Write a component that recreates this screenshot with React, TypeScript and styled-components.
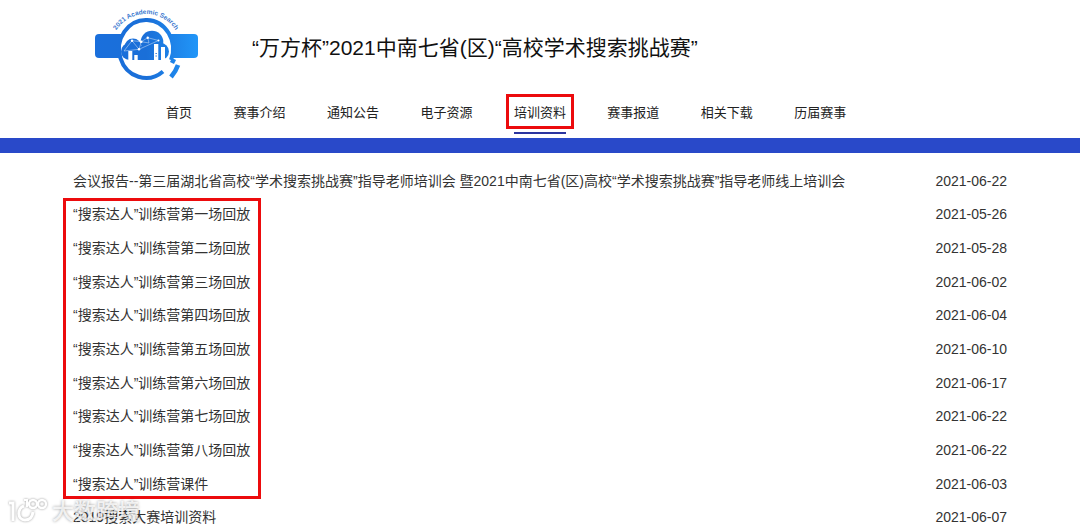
import React from "react";
import styled, { createGlobalStyle } from "styled-components";

const GlobalStyle = createGlobalStyle`
  * { box-sizing: border-box; }
  body {
    margin: 0;
    background: #fff;
    color: #333;
    font-family: "Liberation Sans", Arial, "Noto Sans CJK SC", sans-serif;
  }
`;

const Page = styled.div`
  position: relative;
  height: 100vh;
  overflow: hidden;
`;

const Header = styled.header`
  display: flex;
  align-items: center;
  gap: 52px;
  height: 96px;
  padding-left: 92px;
`;

const Title = styled.h1`
  margin: 0;
  font-size: 21px;
  line-height: 28px;
  font-weight: 400;
  color: #111;
  white-space: nowrap;
`;

const Nav = styled.nav`
  display: flex;
  justify-content: space-between;
  width: 63%;
  height: 42px;
  margin-left: 166px;
`;

const NavLink = styled.a<{ $active?: boolean }>`
  position: relative;
  height: 38px;
  border-bottom: 2px solid ${(p) => (p.$active ? "#2b35a0" : "transparent")};
  color: #222;
  font-size: 13px;
  line-height: 34px;
  text-decoration: none;
  white-space: nowrap;
`;

const Marker = styled.span`
  position: absolute;
  border: 3px solid #ec0b0d;
  pointer-events: none;
`;

const NavMarker = styled(Marker)`
  inset: -2px -8px 3px;
`;

const ListMarker = styled(Marker)`
  top: 34px;
  left: -10px;
  width: 198px;
  height: 301px;
`;

const Band = styled.div`
  height: 15px;
  background: #2949c9;
`;

const List = styled.ul`
  position: relative;
  display: grid;
  grid-auto-rows: 1fr;
  height: 370px;
  margin: 11px 73px 0;
  padding: 0;
  list-style: none;
`;

const Row = styled.li`
  display: flex;
  justify-content: space-between;
  align-items: center;
  font-size: 14px;
  line-height: 20px;
  white-space: nowrap;
`;

const RowLink = styled.a`
  color: #333;
  text-decoration: none;
`;

const Watermark = styled.div`
  position: absolute;
  left: 8px;
  bottom: 4px;
  display: flex;
  align-items: center;
  gap: 4px;
  color: rgba(255, 255, 255, 0.8);
  font-size: 22px;
  line-height: 30px;
  font-weight: 500;
  text-shadow: 0 0 3px rgba(0, 0, 0, 0.4);
`;

const WatermarkIcon = styled.svg`
  overflow: visible;
  filter: drop-shadow(0 0 1px rgba(0, 0, 0, 0.4));
`;

const nav = ["首页", "赛事介绍", "通知公告", "电子资源", "培训资料", "赛事报道", "相关下载", "历届赛事"];

const rows = [
  ["会议报告--第三届湖北省高校“学术搜索挑战赛”指导老师培训会 暨2021中南七省(区)高校“学术搜索挑战赛”指导老师线上培训会", "2021-06-22"],
  ["“搜索达人”训练营第一场回放", "2021-05-26"],
  ["“搜索达人”训练营第二场回放", "2021-05-28"],
  ["“搜索达人”训练营第三场回放", "2021-06-02"],
  ["“搜索达人”训练营第四场回放", "2021-06-04"],
  ["“搜索达人”训练营第五场回放", "2021-06-10"],
  ["“搜索达人”训练营第六场回放", "2021-06-17"],
  ["“搜索达人”训练营第七场回放", "2021-06-22"],
  ["“搜索达人”训练营第八场回放", "2021-06-22"],
  ["“搜索达人”训练营课件", "2021-06-03"],
  ["2019搜索大赛培训资料", "2021-06-07"],
];

function Logo() {
  return (
    <svg width="108" height="84" viewBox="0 0 108 84" role="img" aria-label="2021 Academic Search">
      <defs>
        <linearGradient id="blue" gradientUnits="userSpaceOnUse" x1="3" y1="0" x2="106" y2="0">
          <stop offset="0" stopColor="#1a6fdc" />
          <stop offset="0.5" stopColor="#1a6fd8" />
          <stop offset="1" stopColor="#2196f8" />
        </linearGradient>
        <path id="arc" d="M19 43 A35 35 0 0 1 89 43" />
      </defs>
      <rect x="3" y="28" width="103" height="24" rx="4" fill="url(#blue)" />
      <ellipse cx="54" cy="43" rx="27" ry="29" fill="#fff" />
      <path d="M71 65.500 A27 29 0 1 1 79 54" fill="none" stroke="url(#blue)" strokeWidth="4" />
      <g fill="url(#blue)">
        <circle cx="41" cy="41" r="8.500" />
        <circle cx="37.500" cy="45.500" r="8.500" />
        <circle cx="60" cy="36" r="11.300" />
        <circle cx="68.500" cy="45.500" r="8.500" />
        <path d="M37 40h32v14H37z" />
      </g>
      <g fill="#fff">
        <path d="M36.300 45h4v9.500h-4zM42.300 49h3.400v5.500h-3.400zM62 38h4.300v16.500H62zM69 41h4v13.500h-4z" />
        <circle cx="40" cy="34.700" r="1.200" />
        <circle cx="55.700" cy="31.700" r="1.200" />
        <circle cx="49.300" cy="35.700" r="1.200" />
        <circle cx="66.500" cy="34.500" r="1" />
        <circle cx="47" cy="43.300" r="1.200" />
      </g>
      <path d="M63.500 47.500h1.300M63.500 50h1.300" stroke="#1a6fd8" strokeWidth="1" />
      <path
        d="M32 45 40 34.700 47 43.300 49.300 35.700 55.700 31.700 66.500 34.500 47 43.300 32 45M40 34.700 49.300 35.700 57 37 55.700 31.700"
        fill="none"
        stroke="#fff"
        strokeWidth=".6"
        opacity=".7"
      />
      <path d="M79 54l4 2M86 59q-2 6-7 12" stroke="url(#blue)" strokeWidth="4.600" fill="none" />
      <text fill="#3a78cf" fontSize="6.500" fontWeight="700" textAnchor="middle">
        <textPath href="#arc" startOffset="50%">2021 Academic Search</textPath>
      </text>
    </svg>
  );
}

export default function App() {
  return (
    <>
      <GlobalStyle />
      <Page>
        <Header>
          <Logo />
          <Title>“万方杯”2021中南七省(区)“高校学术搜索挑战赛”</Title>
        </Header>
        <Nav>
          {nav.map((label) => (
            <NavLink href="#" key={label} $active={label === "培训资料"}>
              {label}
              {label === "培训资料" && <NavMarker />}
            </NavLink>
          ))}
        </Nav>
        <Band />
        <List>
          {rows.map(([title, date]) => (
            <Row key={title}>
              <RowLink href="#">{title}</RowLink>
              <time dateTime={date}>{date}</time>
            </Row>
          ))}
          <ListMarker as="li" />
        </List>
        <Watermark>
          <WatermarkIcon width="40" height="30" viewBox="0 0 40 30" fill="none" stroke="#fff" aria-hidden="true">
            <path d="M1 6h4v18M16 9C9 11 9 23 17 23q7 0 8-8" strokeWidth="3" />
            <path d="M16 3h3v7" strokeWidth="2" />
            <circle cx="25" cy="7" r="4" strokeWidth="2.400" />
            <circle cx="34" cy="7" r="4" strokeWidth="2.400" />
          </WatermarkIcon>
          大数跨境
        </Watermark>
      </Page>
    </>
  );
}
